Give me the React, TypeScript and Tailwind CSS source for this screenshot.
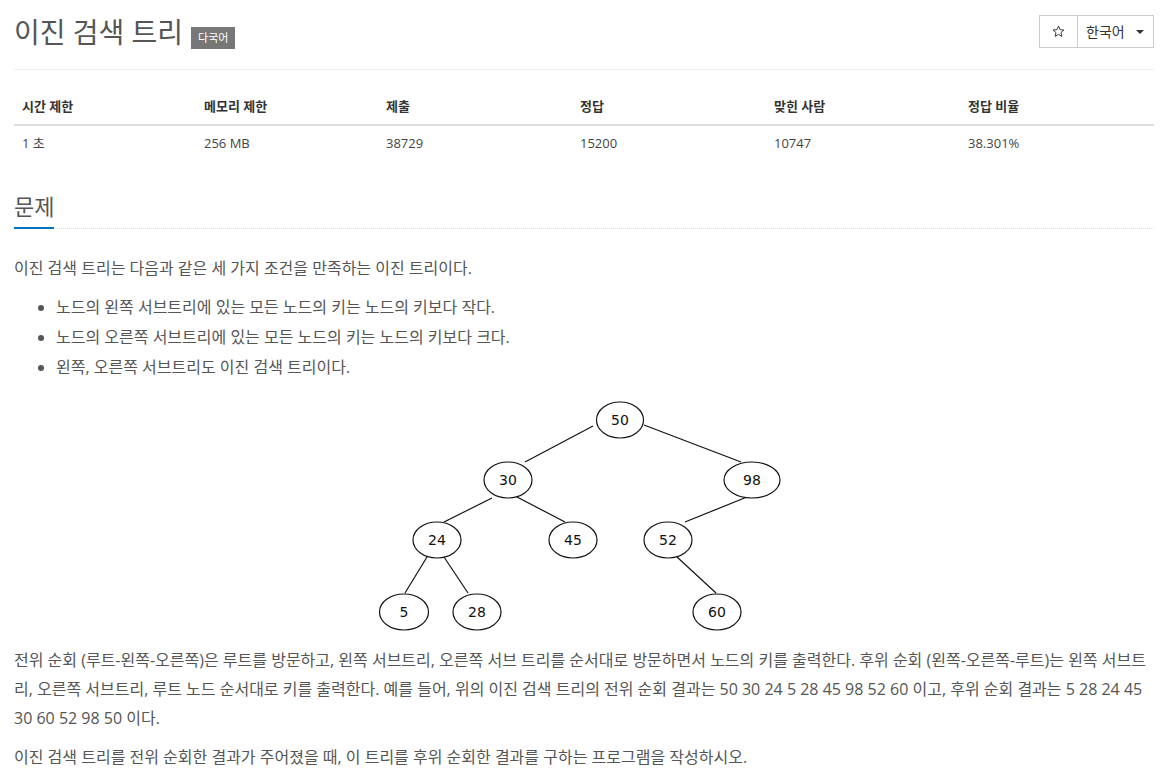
import React from "react";

const FONT = '"Open Sans", "Noto Sans CJK KR", sans-serif';

type Node = { v: string; x: number; y: number; rx: number };
const nodes: Node[] = [
  { v: "50", x: 620, y: 419, rx: 23.5 },
  { v: "30", x: 508, y: 479, rx: 24 },
  { v: "98", x: 752, y: 479, rx: 28 },
  { v: "24", x: 437, y: 539, rx: 24 },
  { v: "45", x: 573, y: 539, rx: 24 },
  { v: "52", x: 668, y: 539, rx: 24 },
  { v: "5", x: 404, y: 611, rx: 24.5 },
  { v: "28", x: 477, y: 611, rx: 24 },
  { v: "60", x: 717, y: 611, rx: 24 },
];

const edges: [number, number, number, number][] = [
  [593, 425, 525, 461],
  [644, 424, 741, 461],
  [492, 497, 444, 521],
  [517, 496, 565, 521],
  [747, 496, 685, 521],
  [427, 556, 405, 592],
  [444, 556, 468, 592],
  [677, 556, 716, 592],
];

function Tree() {
  return (
    <svg
      width={430}
      height={250}
      viewBox="369 390 430 250"
      className="block mx-auto mt-[9px]"
    >
      {edges.map((e, i) => (
        <line key={i} x1={e[0]} y1={e[1]} x2={e[2]} y2={e[3]} stroke="#111" strokeWidth={1.2} />
      ))}
      {nodes.map((n) => (
        <g key={n.v}>
          <ellipse cx={n.x} cy={n.y} rx={n.rx} ry={18} fill="white" stroke="#111" strokeWidth={1.2} />
          <text
            x={n.x}
            y={n.y + 5}
            textAnchor="middle"
            fontSize={14}
            fill="#111"
            fontFamily='"DejaVu Sans", "Liberation Sans", sans-serif'
          >
            {n.v}
          </text>
        </g>
      ))}
    </svg>
  );
}

export default function App() {
  const heads = ["시간 제한", "메모리 제한", "제출", "정답", "맞힌 사람", "정답 비율"];
  const vals = ["1 초", "256 MB", "38729", "15200", "10747", "38.301%"];
  const widths = ["w-[182px]", "w-[182px]", "w-[194px]", "w-[194px]", "w-[194px]", "w-[194px]"];
  return (
    <div className="bg-white min-h-[779px] pl-[14px] pr-[19px] text-[#555]" style={{ fontFamily: FONT }}>
      {/* header */}
      <div className="flex items-start justify-between pt-[15px] pb-[20px] border-b border-[#eee]">
        <div className="flex items-center">
          <h1 className="text-[28px] leading-[33px] text-[#555] font-normal">이진 검색 트리</h1>
          <span className="ml-[8px] mt-[12px] h-[22px] px-[7px] flex items-center bg-[#777] text-white text-[11px]">
            다국어
          </span>
        </div>
        <div className="flex h-[33px] text-[#333] text-[14px]">
          <div className="w-[39px] border border-[#ccc] flex items-center justify-center">
            <svg width="13" height="13" viewBox="0 0 24 24" fill="none" stroke="#333" strokeWidth="1.8">
              <polygon points="12,2 14.9,8.6 22,9.3 16.6,14 18.2,21 12,17.3 5.8,21 7.4,14 2,9.3 9.1,8.6" />
            </svg>
          </div>
          <div className="w-[76px] border border-l-0 border-[#ccc] flex items-center pl-[8px]">
            <span>한국어</span>
            <span className="ml-[11px] w-0 h-0 border-l-[4px] border-r-[4px] border-t-[4px] border-l-transparent border-r-transparent border-t-[#333]" />
          </div>
        </div>
      </div>

      {/* table */}
      <table className="mt-[19px] w-full border-collapse text-[13px] text-[#333]">
        <thead>
          <tr>
            {heads.map((h, i) => (
              <th key={h} className={`${widths[i]} text-left font-bold px-[8px] py-[8px] leading-[19px] border-b-2 border-[#ddd]`}>
                {h}
              </th>
            ))}
          </tr>
        </thead>
        <tbody>
          <tr>
            {vals.map((v) => (
              <td key={v} className="px-[8px] py-[8px] leading-[19px] text-[#444]">
                {v}
              </td>
            ))}
          </tr>
        </tbody>
      </table>

      {/* section heading */}
      <div className="mt-[30px] border-b border-dotted border-[#ddd] flex">
        <h2 className="text-[22px] leading-[30px] pb-[6px] font-normal text-[#555] border-b-2 border-[#0076c0] mb-[-1px]">
          문제
        </h2>
      </div>

      <div className="mt-[25px] text-[16px] text-[#555]">
        <p className="leading-[29px]">이진 검색 트리는 다음과 같은 세 가지 조건을 만족하는 이진 트리이다.</p>
        <ul className="mt-[9px] list-disc pl-[42px]">
          <li className="leading-[30px]">노드의 왼쪽 서브트리에 있는 모든 노드의 키는 노드의 키보다 작다.</li>
          <li className="leading-[30px]">노드의 오른쪽 서브트리에 있는 모든 노드의 키는 노드의 키보다 크다.</li>
          <li className="leading-[30px]">왼쪽, 오른쪽 서브트리도 이진 검색 트리이다.</li>
        </ul>
        <Tree />
        <p className="mt-[5px] leading-[29px]">
          전위 순회 (루트-왼쪽-오른쪽)은 루트를 방문하고, 왼쪽 서브트리, 오른쪽 서브 트리를 순서대로 방문하면서 노드의 키를 출력한다. 후위 순회 (왼쪽-오른쪽-루트)는 왼쪽 서브트리, 오른쪽 서브트리, 루트 노드 순서대로 키를 출력한다. 예를 들어, 위의 이진 검색 트리의 전위 순회 결과는 50 30 24 5 28 45 98 52 60 이고, 후위 순회 결과는 5 28 24 45 30 60 52 98 50 이다.
        </p>
        <p className="mt-[10px] leading-[29px]">
          이진 검색 트리를 전위 순회한 결과가 주어졌을 때, 이 트리를 후위 순회한 결과를 구하는 프로그램을 작성하시오.
        </p>
      </div>
    </div>
  );
}
